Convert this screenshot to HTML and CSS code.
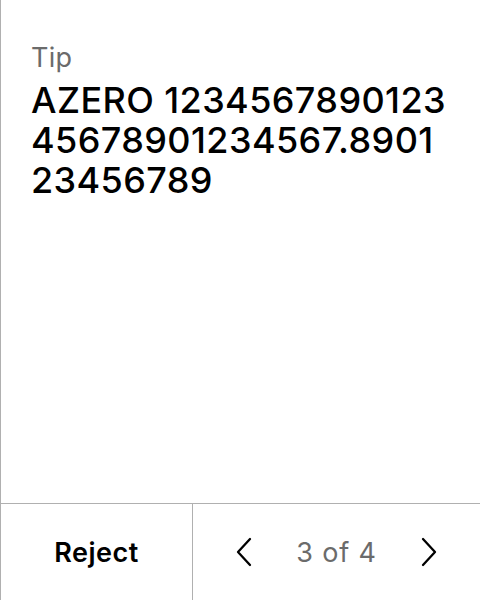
FILE: index.html
```html
<!DOCTYPE html>
<html>
<head>
<meta charset="utf-8">
<link rel="stylesheet" href="styles.css">
</head>
<body>
<div class="sheet">
  <div class="content">
    <div class="label">Tip</div>
    <div class="value">AZERO 1234567890123 45678901234567.8901 23456789</div>
  </div>
  <div class="footer">
    <div class="reject">Reject</div>
    <div class="pager">
      <svg class="chev" width="18" height="30" viewBox="0 0 18 30"><path d="M15 2 L3 15 L15 28" fill="none" stroke="#000" stroke-width="2.3" stroke-linecap="round" stroke-linejoin="round"/></svg>
      <span class="count">3 of 4</span>
      <svg class="chev" width="18" height="30" viewBox="0 0 18 30"><path d="M3 2 L15 15 L3 28" fill="none" stroke="#000" stroke-width="2.3" stroke-linecap="round" stroke-linejoin="round"/></svg>
    </div>
  </div>
</div>
</body>
</html>
```
FILE: styles.css
```css
html, body {
  margin: 0;
  padding: 0;
  background: #fff;
}
body {
  font-family: Inter, "Noto Sans", sans-serif;
}
.sheet {
  width: 480px;
  height: 600px;
  box-sizing: border-box;
  border-left: 1px solid #b0b0b0;
  display: flex;
  flex-direction: column;
}
.content {
  flex: 1;
  padding: 42px 20px 0 30px;
}
.label {
  font-size: 27px;
  line-height: 32px;
  letter-spacing: 0.3px;
  color: #6b6b6b;
}
.value {
  margin-top: 6px;
  font-size: 36px;
  line-height: 40px;
  font-weight: 500;
  letter-spacing: 0.4px;
  color: #000;
  width: 425px;
}
.footer {
  height: 96px;
  border-top: 1px solid #b0b0b0;
  display: flex;
}
.reject {
  width: 191px;
  border-right: 1px solid #b0b0b0;
  display: flex;
  align-items: center;
  justify-content: center;
  font-size: 27px;
  font-weight: 600;
  letter-spacing: 0.5px;
  color: #000;
}
.pager {
  flex: 1;
  display: flex;
  align-items: center;
  justify-content: center;
  gap: 43px;
}
.count {
  font-size: 27px;
  letter-spacing: 0.8px;
  color: #6b6b6b;
}
.chev {
  display: block;
}
```
